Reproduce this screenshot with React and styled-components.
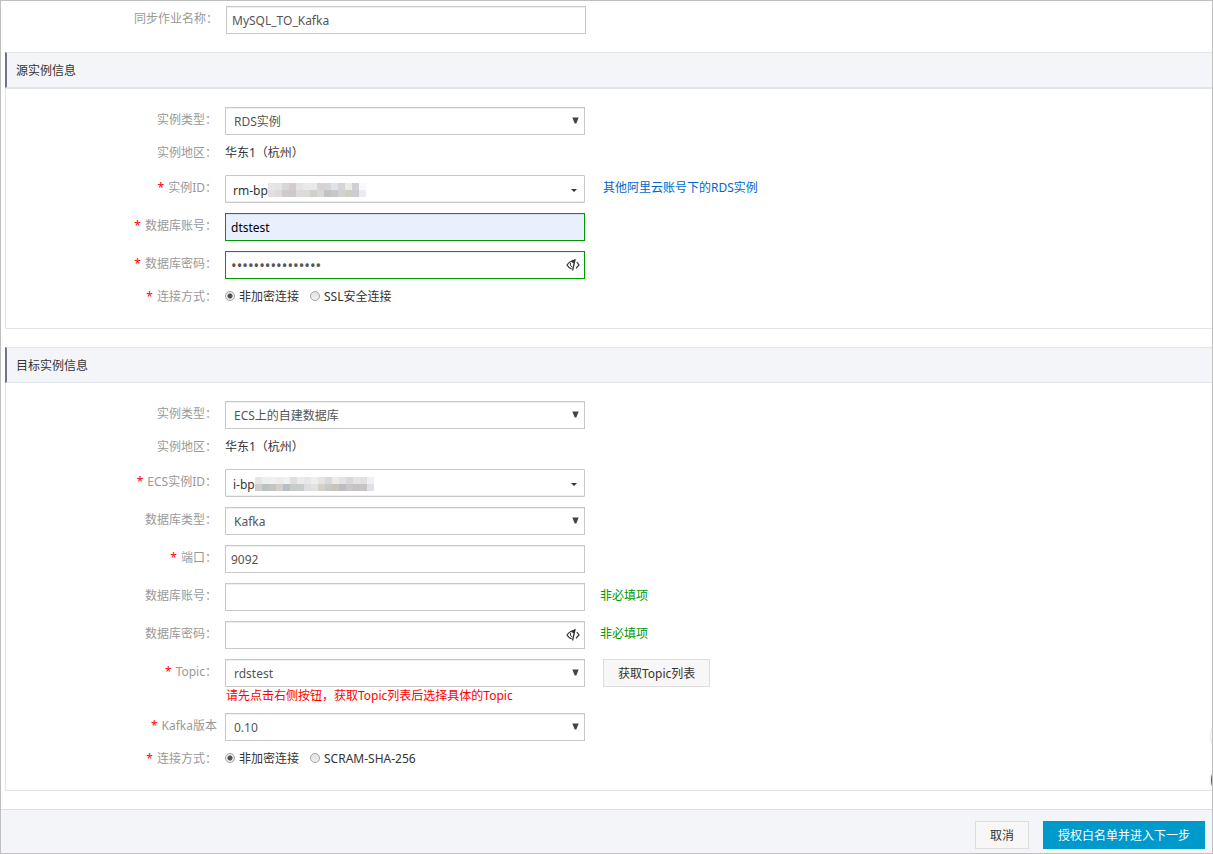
import { useState } from "react";
import styled, { createGlobalStyle } from "styled-components";

const sourceMask = [
    "#e6e6e8 #e4e4e2 #d9d6d9 #d2cccf #e4e4e6 #e6eae8 #e6eae8 #d8d2d2 #d6d4d6 #dde3ea #d4d4d4 #eaecea #d0d0d2 #f6faff",
    "#e0e0e4 #e0dad6 #cdcaca #cfc8cc #dcdcde #dadada #d0cfca #d8d8d8 #c2c2c2 #c8c6c8 #d2d2d2 #d0ccc6 #cccccc #e9ebf2"
];

const targetMask = [
    "#e6e6e6 #ecf0ee #eef0f2 #ebebe9 #f0f0f0 #e2dcdc #ececec #e9e6ea #eeeeee #e4e4e6 #d8dad6 #eeeae8 #e4e2e4 #dad8dc #e4e4e4 #e2e0e2 #eef0f4",
    "#d0cdca #bcc2c2 #c6c4c2 #d2cecc #b8bec4 #c6cccb #c9cccb #dedee0 #e2e2e2 #d4d0c8 #c7c9c9 #c9c5bd #bfbbbf #c8c6c8 #c6c2c2 #c6c4c4 #dfe1e6"
];

export default function App() {
    const [sourceConnection, setSourceConnection] = useState("plain");
    const [targetConnection, setTargetConnection] = useState("plain");

    return (
        <Page>
            <GlobalStyle />
            <JobRow>
                <Label htmlFor="job-name">同步作业名称：</Label>
                <TextInput id="job-name" defaultValue="MySQL_TO_Kafka" />
            </JobRow>

            <Section>
                <SectionTitle>源实例信息</SectionTitle>
                <SectionBody $ruled>
                    <SelectRow id="source-type" label="实例类型" value="RDS实例" />
                    <RegionRow />
                    <InstanceRow id="source-id" label="实例ID" value="rm-bp" mask={sourceMask}>
                        <OtherAccountLink href="#">其他阿里云账号下的RDS实例</OtherAccountLink>
                    </InstanceRow>
                    <Row>
                        <FieldLabel id="source-user" text="数据库账号" required />
                        <TextInput id="source-user" defaultValue="dtstest" $valid $autofilled />
                    </Row>
                    <PasswordRow id="source-password" value="1234567890123456" required valid />
                    <ConnectionRow name="source-connection" secureText="SSL安全连接" selected={sourceConnection} setSelected={setSourceConnection} />
                </SectionBody>
            </Section>

            <Section>
                <SectionTitle>目标实例信息</SectionTitle>
                <SectionBody>
                    <SelectRow id="target-type" label="实例类型" value="ECS上的自建数据库" />
                    <RegionRow />
                    <InstanceRow id="target-id" label="ECS实例ID" value="i-bp" mask={targetMask} />
                    <SelectRow id="target-engine" label="数据库类型" value="Kafka" />
                    <Row>
                        <FieldLabel id="target-port" text="端口" required />
                        <TextInput id="target-port" defaultValue="9092" />
                    </Row>
                    <Row>
                        <FieldLabel id="target-user" text="数据库账号" />
                        <TextInput id="target-user" />
                        <Optional>非必填项</Optional>
                    </Row>
                    <PasswordRow id="target-password" value="">
                        <Optional>非必填项</Optional>
                    </PasswordRow>
                    <SelectRow id="target-topic" label="Topic" value="rdstest" required hint="请先点击右侧按钮，获取Topic列表后选择具体的Topic">
                        <TopicButton type="button">获取Topic列表</TopicButton>
                    </SelectRow>
                    <SelectRow id="target-version" label="Kafka版本" value="0.10" required noColon />
                    <ConnectionRow name="target-connection" secureText="SCRAM-SHA-256" selected={targetConnection} setSelected={setTargetConnection} />
                </SectionBody>
            </Section>

            <Footer>
                <Button type="button">取消</Button>
                <PrimaryButton type="button">授权白名单并进入下一步</PrimaryButton>
            </Footer>

            <FloatingTools>
                <FloatingCircle $color="#FFFFFF" />
                <FloatingCircle $color="#1070C8" />
            </FloatingTools>
        </Page>
    )
}

function FieldLabel({ id, text, required, noColon }) {
    return (
        <Label htmlFor={id}>
            {required && <Star>*</Star>}
            {text}{!noColon && "："}
        </Label>
    )
}

function SelectRow({ id, label, value, required, noColon, hint, children }) {
    return (
        <Row>
            <FieldLabel id={id} text={label} required={required} noColon={noColon} />
            <div>
                <FieldBox>
                    <Select id={id} defaultValue={value}>
                        <option>{value}</option>
                    </Select>
                    <SelectArrow viewBox="0 0 7 7"><path d="M.3.5h6.400L4.300 6.500H2.700z" /></SelectArrow>
                </FieldBox>
                {hint && <Hint>{hint}</Hint>}
            </div>
            {children}
        </Row>
    )
}

function RegionRow() {
    return (
        <StaticRow>
            <Label as="span">实例地区：</Label>
            <span>华东1（杭州）</span>
        </StaticRow>
    )
}

function InstanceRow({ id, label, value, mask, children }) {
    return (
        <Row>
            <FieldLabel id={id} text={label} required />
            <Combo id={id} type="button">
                <span>{value}</span>
                <Mask>
                    {mask.map((line, row) => (
                        <MaskLine key={row}>
                            {line.split(" ").map((color, index) => <MaskCell key={index} $color={color} />)}
                        </MaskLine>
                    ))}
                </Mask>
                <Caret />
            </Combo>
            {children}
        </Row>
    )
}

function PasswordRow({ id, value, required, valid, children }) {
    const [isVisible, setIsVisible] = useState(false);

    return (
        <Row>
            <FieldLabel id={id} text="数据库密码" required={required} />
            <FieldBox>
                <PasswordInput id={id} type={isVisible ? "text" : "password"} defaultValue={value} $valid={valid} />
                <EyeButton type="button" aria-label="显示密码" onClick={() => setIsVisible(!isVisible)}>
                    <svg width="14" height="14" viewBox="0 0 14 14" fill="none" stroke="#333333">
                        <path d="M8.500 2.500C5.500 2.500 3 4 1 7c1 1.800 2.500 3.200 4.600 3.800" strokeWidth="1.200" />
                        <path d="M5 3.200 9.600.800 8.400 5.400 6 4.600z" fill="#333333" stroke="none" />
                        <path d="M4.800 4.800C3.900 6.300 4.300 8.300 6.300 8.800" />
                        <path d="M9 1.500 6.600 12.500" strokeWidth="1.300" />
                        <path d="M10.800 4 13 7l-3 3.400" strokeWidth="1.200" />
                    </svg>
                </EyeButton>
            </FieldBox>
            {children}
        </Row>
    )
}

function ConnectionRow({ name, secureText, selected, setSelected }) {
    return (
        <StaticRow>
            <Label as="span"><Star>*</Star>连接方式：</Label>
            <RadioLabel>
                <Radio type="radio" name={name} checked={selected === "plain"} onChange={() => setSelected("plain")} />
                非加密连接
            </RadioLabel>
            <RadioLabel>
                <Radio type="radio" name={name} checked={selected === "secure"} onChange={() => setSelected("secure")} />
                {secureText}
            </RadioLabel>
        </StaticRow>
    )
}

const GlobalStyle = createGlobalStyle `
    * {
        box-sizing: border-box;
    }

    body {
        margin: 0;
        background-color: #FFFFFF;
    }

    body, input, select, button {
        font-family: 'Noto Sans', 'Noto Sans CJK SC', sans-serif;
        font-size: 12px;
        color: #333333;
    }
`

const Page = styled.div `
    position: relative;
    display: flex;
    flex-direction: column;
    min-height: 100vh;
    border: 1px solid #BFBFBF;
    overflow: hidden;
`

const Row = styled.div `
    display: flex;
    align-items: flex-start;
    margin-bottom: 10px;
    line-height: 26px;
`

const JobRow = styled(Row) `
    padding: 5px 0 0 6px;
    margin-bottom: 18px;
`

const StaticRow = styled(Row) `
    padding-bottom: 4px;
    line-height: 16px;
`

const Label = styled.label `
    flex-shrink: 0;
    width: 211px;
    margin-right: 8px;
    text-align: right;
    color: #999999;
`

const Star = styled.span `
    margin-right: 4px;
    color: #FF0000;
`

const Section = styled.section `
    margin: 0 0 18px 4px;
`

const SectionTitle = styled.h2 `
    margin: 0;
    padding-left: 9px;
    height: 36px;
    border: solid #E0E5EB;
    border-width: 1px 0;
    border-left: 2px solid #73738A;
    background-color: #F4F5F9;
    font-size: 12px;
    font-weight: 400;
    line-height: 36px;
`

const SectionBody = styled.div `
    padding: 18px 0 9px;
    border: solid #E0E5EB;
    border-width: ${({ $ruled }) => $ruled ? "1px" : "0"} 0 1px 1px;
`

const FieldBox = styled.div `
    position: relative;
    width: 360px;
    height: 28px;
`

const TextInput = styled.input `
    display: block;
    width: 360px;
    height: 28px;
    padding: 0 5px;
    border: 1px solid ${({ $valid }) => $valid ? "#009900" : "#C8C8C8"};
    border-radius: 0;
    background-color: ${({ $autofilled }) => $autofilled ? "#E8F0FE" : "#FFFFFF"};
    box-shadow: inset 0 1px 1px rgba(0, 0, 0, 0.07);
    color: ${({ $autofilled }) => $autofilled ? "#000000" : "#555555"};
    outline: none;
`

const PasswordInput = styled(TextInput) `
    font-size: 15px;
`

const Select = styled.select `
    appearance: none;
    width: 100%;
    height: 28px;
    padding: 0 24px 0 8px;
    border: 1px solid #C8C8C8;
    border-radius: 0;
    background-color: #FFFFFF;
    box-shadow: inset 0 1px 1px rgba(0, 0, 0, 0.07);
    color: #555555;
    outline: none;
`

const SelectArrow = styled.svg `
    position: absolute;
    top: 10px;
    right: 6px;
    width: 7px;
    height: 7px;
    fill: #444444;
    pointer-events: none;
`

const Combo = styled.button `
    display: flex;
    align-items: center;
    width: 360px;
    height: 28px;
    padding: 2px 7px 0;
    border: 1px solid #C8C8C8;
    border-radius: 1px;
    background-color: #FFFFFF;
    box-shadow: inset 0 -1px 1px rgba(0, 0, 0, 0.07);
`

const Mask = styled.span `
    display: flex;
    flex-direction: column;
`

const MaskLine = styled.span `
    display: flex;
`

const MaskCell = styled.span `
    width: 7px;
    height: 7px;
    background-color: ${({ $color }) => $color};
`

const Caret = styled.span `
    margin-left: auto;
    border: 3px solid transparent;
    border-top-color: #333333;
    border-bottom: 0;
`

const OtherAccountLink = styled.a `
    margin-left: 18px;
    color: #0066CC;
    text-decoration: none;
`

const EyeButton = styled.button `
    position: absolute;
    top: 7px;
    right: 5px;
    display: flex;
    padding: 0;
    border: none;
    background: none;
    cursor: pointer;
`

const Optional = styled.span `
    margin-left: 15px;
    color: #009900;
`

const Hint = styled.p `
    margin: 0;
    padding: 2px 0 0 1px;
    line-height: 14px;
    color: #FF0000;
`

const RadioLabel = styled.label `
    display: flex;
    margin-right: 11px;
`

const Radio = styled.input `
    appearance: none;
    flex-shrink: 0;
    width: 10px;
    height: 10px;
    margin: 2px 4px 0 0;
    border: 1px solid #A5A5A5;
    border-radius: 50%;
    background: linear-gradient(#E2E2E2, #F0F0F0);

    &:checked {
        background: radial-gradient(circle, #505050 2px, #ECECEC 3px);
    }
`

const Button = styled.button `
    height: 28px;
    padding: 0 14px;
    border: 1px solid #DDDDDD;
    background-color: #F7F7F7;
    cursor: pointer;
`

const TopicButton = styled(Button) `
    margin-left: 18px;
`

const PrimaryButton = styled(Button) `
    border-color: #0099CC;
    background-color: #0099CC;
    color: #FFFFFF;
`

const Footer = styled.footer `
    display: flex;
    flex: 1;
    justify-content: flex-end;
    align-items: flex-start;
    gap: 14px;
    padding: 11px 7px 4px;
    border-top: 1px solid #DBDEE4;
    background-color: #F4F5F9;
`

const FloatingTools = styled.div `
    position: absolute;
    right: -35px;
    bottom: 55px;
    display: flex;
    flex-direction: column;
    gap: 8px;
`

const FloatingCircle = styled.div `
    width: 36px;
    height: 36px;
    border-radius: 50%;
    background-color: ${({ $color }) => $color};
    box-shadow: 0 0 2px rgba(0, 0, 0, 0.3);
`
